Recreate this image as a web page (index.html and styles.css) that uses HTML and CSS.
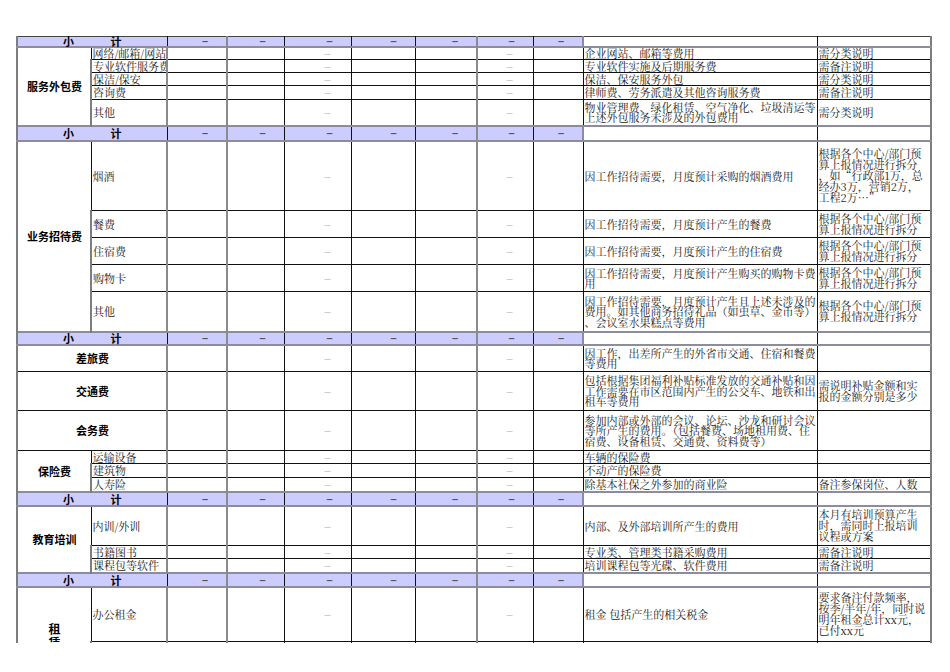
FILE: index.html
```html
<!DOCTYPE html>
<html lang="zh">
<head>
<meta charset="utf-8">
<title>费用预算说明</title>
<link rel="stylesheet" href="styles.css">
</head>
<body>
<div class="page">
<table class="sheet">
<colgroup>
<col class="cA"><col class="cB"><col class="cC"><col class="cD"><col class="cE"><col class="cF"><col class="cG"><col class="cH"><col class="cI"><col class="cJ"><col class="cK">
</colgroup>
<tbody>
<tr class="sub first h10"><td colspan="2" class="sl"><div class="slw"><span>小</span><span>计</span></div></td><td class="sd">–</td><td class="sd dD">–</td><td class="sd">–</td><td class="sd">–</td><td class="sd">–</td><td class="sd gH">–</td><td class="sd">–</td><td class="desc"></td><td class="note"></td></tr>

<tr class="h13"><td rowspan="5" class="cat">服务外包费</td><td class="item">网络/邮箱/网站</td><td class="gC"></td><td class="dD"></td><td class="num">–</td><td></td><td></td><td class="num gH">–</td><td></td><td class="desc">企业网站、邮箱等费用</td><td class="note">需分类说明</td></tr>
<tr class="h13"><td class="item">专业软件服务费</td><td class="gC"></td><td class="dD"></td><td class="num">–</td><td></td><td></td><td class="num gH">–</td><td></td><td class="desc">专业软件实施及后期服务费</td><td class="note">需备注说明</td></tr>
<tr class="h13"><td class="item">保洁/保安</td><td class="gC"></td><td class="dD"></td><td class="num">–</td><td></td><td></td><td class="num gH">–</td><td></td><td class="desc">保洁、保安服务外包</td><td class="note">需分类说明</td></tr>
<tr class="h14"><td class="item">咨询费</td><td class="gC"></td><td class="dD"></td><td class="num">–</td><td></td><td></td><td class="num gH">–</td><td></td><td class="desc">律师费、劳务派遣及其他咨询服务费</td><td class="note">需备注说明</td></tr>
<tr class="h26"><td class="item">其他</td><td class="gC"></td><td class="dD"></td><td class="num">–</td><td></td><td></td><td class="num gH">–</td><td></td><td class="desc">物业管理费、绿化租赁、空气净化、垃圾清运等<br>上述外包服务未涉及的外包费用</td><td class="note">需分类说明</td></tr>

<tr class="sub h15"><td colspan="2" class="sl"><div class="slw"><span>小</span><span>计</span></div></td><td class="sd">–</td><td class="sd dD">–</td><td class="sd">–</td><td class="sd">–</td><td class="sd">–</td><td class="sd gH">–</td><td class="sd">–</td><td class="desc"></td><td class="note"></td></tr>

<tr class="h70"><td rowspan="5" class="cat">业务招待费</td><td class="item">烟酒</td><td class="gC"></td><td class="dD"></td><td class="num">–</td><td></td><td></td><td class="num gH">–</td><td></td><td class="desc">因工作招待需要，月度预计采购的烟酒费用</td><td class="note">根据各个中心/部门预<br>算上报情况进行拆分<br>，如“行政部1万，总<br>经办3万，营销2万，<br>工程2万…”</td></tr>
<tr class="h27"><td class="item">餐费</td><td class="gC"></td><td class="dD"></td><td class="num">–</td><td></td><td></td><td class="num gH">–</td><td></td><td class="desc">因工作招待需要，月度预计产生的餐费</td><td class="note">根据各个中心/部门预<br>算上报情况进行拆分</td></tr>
<tr class="h27"><td class="item">住宿费</td><td class="gC"></td><td class="dD"></td><td class="num">–</td><td></td><td></td><td class="num gH">–</td><td></td><td class="desc">因工作招待需要，月度预计产生的住宿费</td><td class="note">根据各个中心/部门预<br>算上报情况进行拆分</td></tr>
<tr class="h27"><td class="item">购物卡</td><td class="gC"></td><td class="dD"></td><td class="num">–</td><td></td><td></td><td class="num gH">–</td><td></td><td class="desc">因工作招待需要，月度预计产生购买的购物卡费<br>用</td><td class="note">根据各个中心/部门预<br>算上报情况进行拆分</td></tr>
<tr class="h40"><td class="item">其他</td><td class="gC"></td><td class="dD"></td><td class="num">–</td><td></td><td></td><td class="num gH">–</td><td></td><td class="desc">因工作招待需要，月度预计产生且上述未涉及的<br>费用。如其他商务招待礼品（如虫草、金币等）<br>、会议室水果糕点等费用</td><td class="note">根据各个中心/部门预<br>算上报情况进行拆分</td></tr>

<tr class="sub h13"><td colspan="2" class="sl"><div class="slw"><span>小</span><span>计</span></div></td><td class="sd">–</td><td class="sd dD">–</td><td class="sd">–</td><td class="sd">–</td><td class="sd">–</td><td class="sd gH">–</td><td class="sd">–</td><td class="desc"></td><td class="note"></td></tr>

<tr class="h27"><td colspan="2" class="cat">差旅费</td><td class="gC"></td><td class="dD"></td><td class="num">–</td><td></td><td></td><td class="num gH">–</td><td></td><td class="desc">因工作，出差所产生的外省市交通、住宿和餐费<br>等费用</td><td class="note"></td></tr>
<tr class="h39"><td colspan="2" class="cat">交通费</td><td class="gC"></td><td class="dD"></td><td class="num">–</td><td></td><td></td><td class="num gH">–</td><td></td><td class="desc">包括根据集团福利补贴标准发放的交通补贴和因<br>工作需要在市区范围内产生的公交车、地铁和出<br>租车等费用</td><td class="note">需说明补贴金额和实<br>报的金额分别是多少</td></tr>
<tr class="h40"><td colspan="2" class="cat">会务费</td><td class="gC"></td><td class="dD"></td><td class="num">–</td><td></td><td></td><td class="num gH">–</td><td></td><td class="desc">参加内部或外部的会议、论坛、沙龙和研讨会议<br>等所产生的费用。（包括餐费、场地租用费、住<br>宿费、设备租赁、交通费、资料费等）</td><td class="note"></td></tr>
<tr class="h13"><td rowspan="3" class="cat">保险费</td><td class="item">运输设备</td><td class="gC"></td><td class="dD"></td><td class="num">–</td><td></td><td></td><td class="num gH">–</td><td></td><td class="desc">车辆的保险费</td><td class="note"></td></tr>
<tr class="h14"><td class="item">建筑物</td><td class="gC"></td><td class="dD"></td><td class="num">–</td><td></td><td></td><td class="num gH">–</td><td></td><td class="desc">不动产的保险费</td><td class="note"></td></tr>
<tr class="h14"><td class="item">人寿险</td><td class="gC"></td><td class="dD"></td><td class="num">–</td><td></td><td></td><td class="num gH">–</td><td></td><td class="desc">除基本社保之外参加的商业险</td><td class="note">备注参保岗位、人数</td></tr>

<tr class="sub h14"><td colspan="2" class="sl"><div class="slw"><span>小</span><span>计</span></div></td><td class="sd">–</td><td class="sd dD">–</td><td class="sd">–</td><td class="sd">–</td><td class="sd">–</td><td class="sd gH">–</td><td class="sd">–</td><td class="desc"></td><td class="note"></td></tr>

<tr class="h40"><td rowspan="3" class="cat">教育培训</td><td class="item">内训/外训</td><td class="gC"></td><td class="dD"></td><td class="num">–</td><td></td><td></td><td class="num gH">–</td><td></td><td class="desc">内部、及外部培训所产生的费用</td><td class="note">本月有培训预算产生<br>时，需同时上报培训<br>议程或方案</td></tr>
<tr class="h13"><td class="item">书籍图书</td><td class="gC"></td><td class="dD"></td><td class="num">–</td><td></td><td></td><td class="num gH">–</td><td></td><td class="desc">专业类、管理类书籍采购费用</td><td class="note">需备注说明</td></tr>
<tr class="h14"><td class="item">课程包等软件</td><td class="gC"></td><td class="dD"></td><td class="num">–</td><td></td><td></td><td class="num gH">–</td><td></td><td class="desc">培训课程包等光碟、软件费用</td><td class="note">需备注说明</td></tr>

<tr class="sub h14"><td colspan="2" class="sl"><div class="slw"><span>小</span><span>计</span></div></td><td class="sd">–</td><td class="sd dD">–</td><td class="sd">–</td><td class="sd">–</td><td class="sd">–</td><td class="sd gH">–</td><td class="sd">–</td><td class="desc"></td><td class="note"></td></tr>

<tr class="h55"><td rowspan="2" class="cat vert">租<br>赁<br>费</td><td class="item">办公租金</td><td class="gC"></td><td class="dD"></td><td class="num">–</td><td></td><td></td><td class="num gH">–</td><td></td><td class="desc">租金 包括产生的相关税金</td><td class="note">要求备注付款频率，<br>按季/半年/年，同时说<br>明年租金总计xx元，<br>已付xx元</td></tr>
<tr class="h57"><td class="item">其他租金</td><td class="gC"></td><td class="dD"></td><td class="num">–</td><td></td><td></td><td class="num gH">–</td><td></td><td class="desc"></td><td class="note"></td></tr>
</tbody>
</table>
</div>
</body>
</html>
```

FILE: styles.css
```css
html, body {
  margin: 0;
  padding: 0;
  background: #ffffff;
}

.page {
  height: 643px;
  overflow: hidden;
  padding: 36px 0 0 16px;
  box-sizing: border-box;
}

.sheet {
  border-collapse: collapse;
  table-layout: fixed;
  width: 914px;
  font-family: "Noto Serif CJK SC", "Noto Sans CJK SC", serif;
  font-size: 11px;
  line-height: 10.5px;
  color: #1a1a1a;
}

.cA { width: 74px; }
.cB { width: 76px; }
.cC { width: 60px; }
.cD { width: 57px; }
.cE { width: 67px; }
.cF { width: 64px; }
.cG { width: 62px; }
.cH { width: 56px; }
.cI { width: 50px; }
.cJ { width: 234px; }
.cK { width: 114px; }

.sheet td {
  border: 1px solid #111111;
  padding: 0 0 0 1px;
  white-space: nowrap;
  overflow: hidden;
  vertical-align: middle;
}

.sheet td:first-child {
  border-left: 2px solid #7d7d7d;
}

.sheet td.gC,
.sheet td.dD,
.sheet td.gH {
  border-left: 2px solid #8a8a8a;
}

.sheet td.note {
  border-right: 2px solid #7d7d7d;
  line-height: 11px;
}

.h10 { height: 10px; }
.h13 { height: 13px; }
.h14 { height: 14px; }
.h15 { height: 15px; }
.h26 { height: 26px; }
.h27 { height: 27px; }
.h39 { height: 39px; }
.h40 { height: 40px; }
.h55 { height: 55px; }
.h57 { height: 57px; }
.h70 { height: 70px; }

/* subtotal rows */
.sub td {
  background: #ccccff;
  border-top: 2px solid #8c8c9c;
  border-bottom: 2px solid #8c8c9c;
  line-height: 8px;
  overflow: visible;
}

.sub.first td {
  border-top: 1px solid #444444;
}

.sub td.desc,
.sub td.note {
  background: #ffffff;
}

.sub td.desc {
  border-left: 2px solid #8a8ab0;
}

.sheet td.sl {
  padding: 0 45px;
  font-family: "Noto Sans CJK SC", sans-serif;
  font-weight: 700;
  font-size: 11px;
  color: #000000;
}

.slw {
  display: flex;
  justify-content: space-between;
}

.sheet td.sd {
  text-align: right;
  padding-right: 18px;
  font-family: "Liberation Sans", sans-serif;
  font-weight: 700;
  color: #555555;
}

.sheet td.num {
  text-align: right;
  padding-right: 20px;
  font-family: "Liberation Sans", sans-serif;
  color: #c4c4c4;
}

.sheet td.cat {
  text-align: center;
  font-family: "Noto Sans CJK SC", sans-serif;
  font-weight: 700;
  color: #000000;
}

.sheet td.vert {
  line-height: 14px;
  font-size: 12px;
}

.sheet td.item {
  text-align: left;
  overflow-x: clip;
  overflow-y: visible;
}

.sheet td.desc,
.sheet td.note {
  text-align: left;
  overflow: visible;
}
```
